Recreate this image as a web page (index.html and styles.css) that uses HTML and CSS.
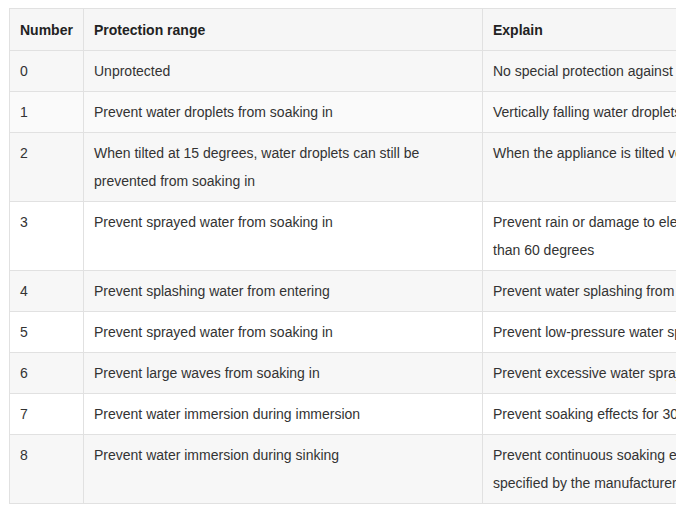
FILE: index.html
```html
<!DOCTYPE html>
<html>
<head>
<meta charset="utf-8">
<link rel="stylesheet" href="styles.css">
</head>
<body>
<table class="ip-table">
  <colgroup>
    <col class="c-num">
    <col class="c-range">
    <col class="c-explain">
  </colgroup>
  <thead>
    <tr><th>Number</th><th>Protection range</th><th>Explain</th></tr>
  </thead>
  <tbody>
    <tr><td>0</td><td>Unprotected</td><td>No special protection against water or moisture</td></tr>
    <tr class="hover"><td>1</td><td>Prevent water droplets from soaking in</td><td>Vertically falling water droplets (such as condensation) will not cause damage to electrical appliances</td></tr>
    <tr><td>2</td><td>When tilted at 15 degrees, water droplets can still be prevented from soaking in</td><td>When the appliance is tilted vertically to 15 degrees, dripping water will not cause damage</td></tr>
    <tr><td>3</td><td>Prevent sprayed water from soaking in</td><td>Prevent rain or damage to electrical appliances caused by water sprayed in a direction with a vertical angle of less<br>than 60 degrees</td></tr>
    <tr><td>4</td><td>Prevent splashing water from entering</td><td>Prevent water splashing from all directions from entering electrical appliances and causing damage</td></tr>
    <tr><td>5</td><td>Prevent sprayed water from soaking in</td><td>Prevent low-pressure water spraying from all directions for at least 3 minutes</td></tr>
    <tr><td>6</td><td>Prevent large waves from soaking in</td><td>Prevent excessive water spraying for at least 3 minutes</td></tr>
    <tr><td>7</td><td>Prevent water immersion during immersion</td><td>Prevent soaking effects for 30 minutes in water up to 1 meter deep</td></tr>
    <tr><td>8</td><td>Prevent water immersion during sinking</td><td>Prevent continuous soaking effects in water deeper than 1 meter, under conditions<br>specified by the manufacturer for each device</td></tr>
  </tbody>
</table>
</body>
</html>
```
FILE: styles.css
```css
html {
  overflow: hidden;
}
body {
  margin: 8px;
  font-family: "Liberation Sans", Arial, sans-serif;
  font-size: 14px;
  color: #333;
  background: #fff;
}
.ip-table {
  border-collapse: collapse;
  table-layout: fixed;
  width: 1100px;
  margin-left: 1px;
}
.c-num { width: 74px; }
.c-range { width: 399px; }
.c-explain { width: 627px; }
.ip-table th,
.ip-table td {
  border: 1px solid #e1e1e1;
  padding: 6px 10px;
  line-height: 28px;
  text-align: left;
  vertical-align: top;
}
.ip-table th {
  font-weight: bold;
  color: #222;
  padding-top: 7px;
  padding-bottom: 6px;
  background: #f6f6f6;
}
.ip-table tbody tr:nth-child(odd) {
  background: #f7f7f7;
}
.ip-table tbody tr.hover {
  background: #fafafa;
}
.ip-table td:nth-child(3) {
  white-space: nowrap;
}
```
